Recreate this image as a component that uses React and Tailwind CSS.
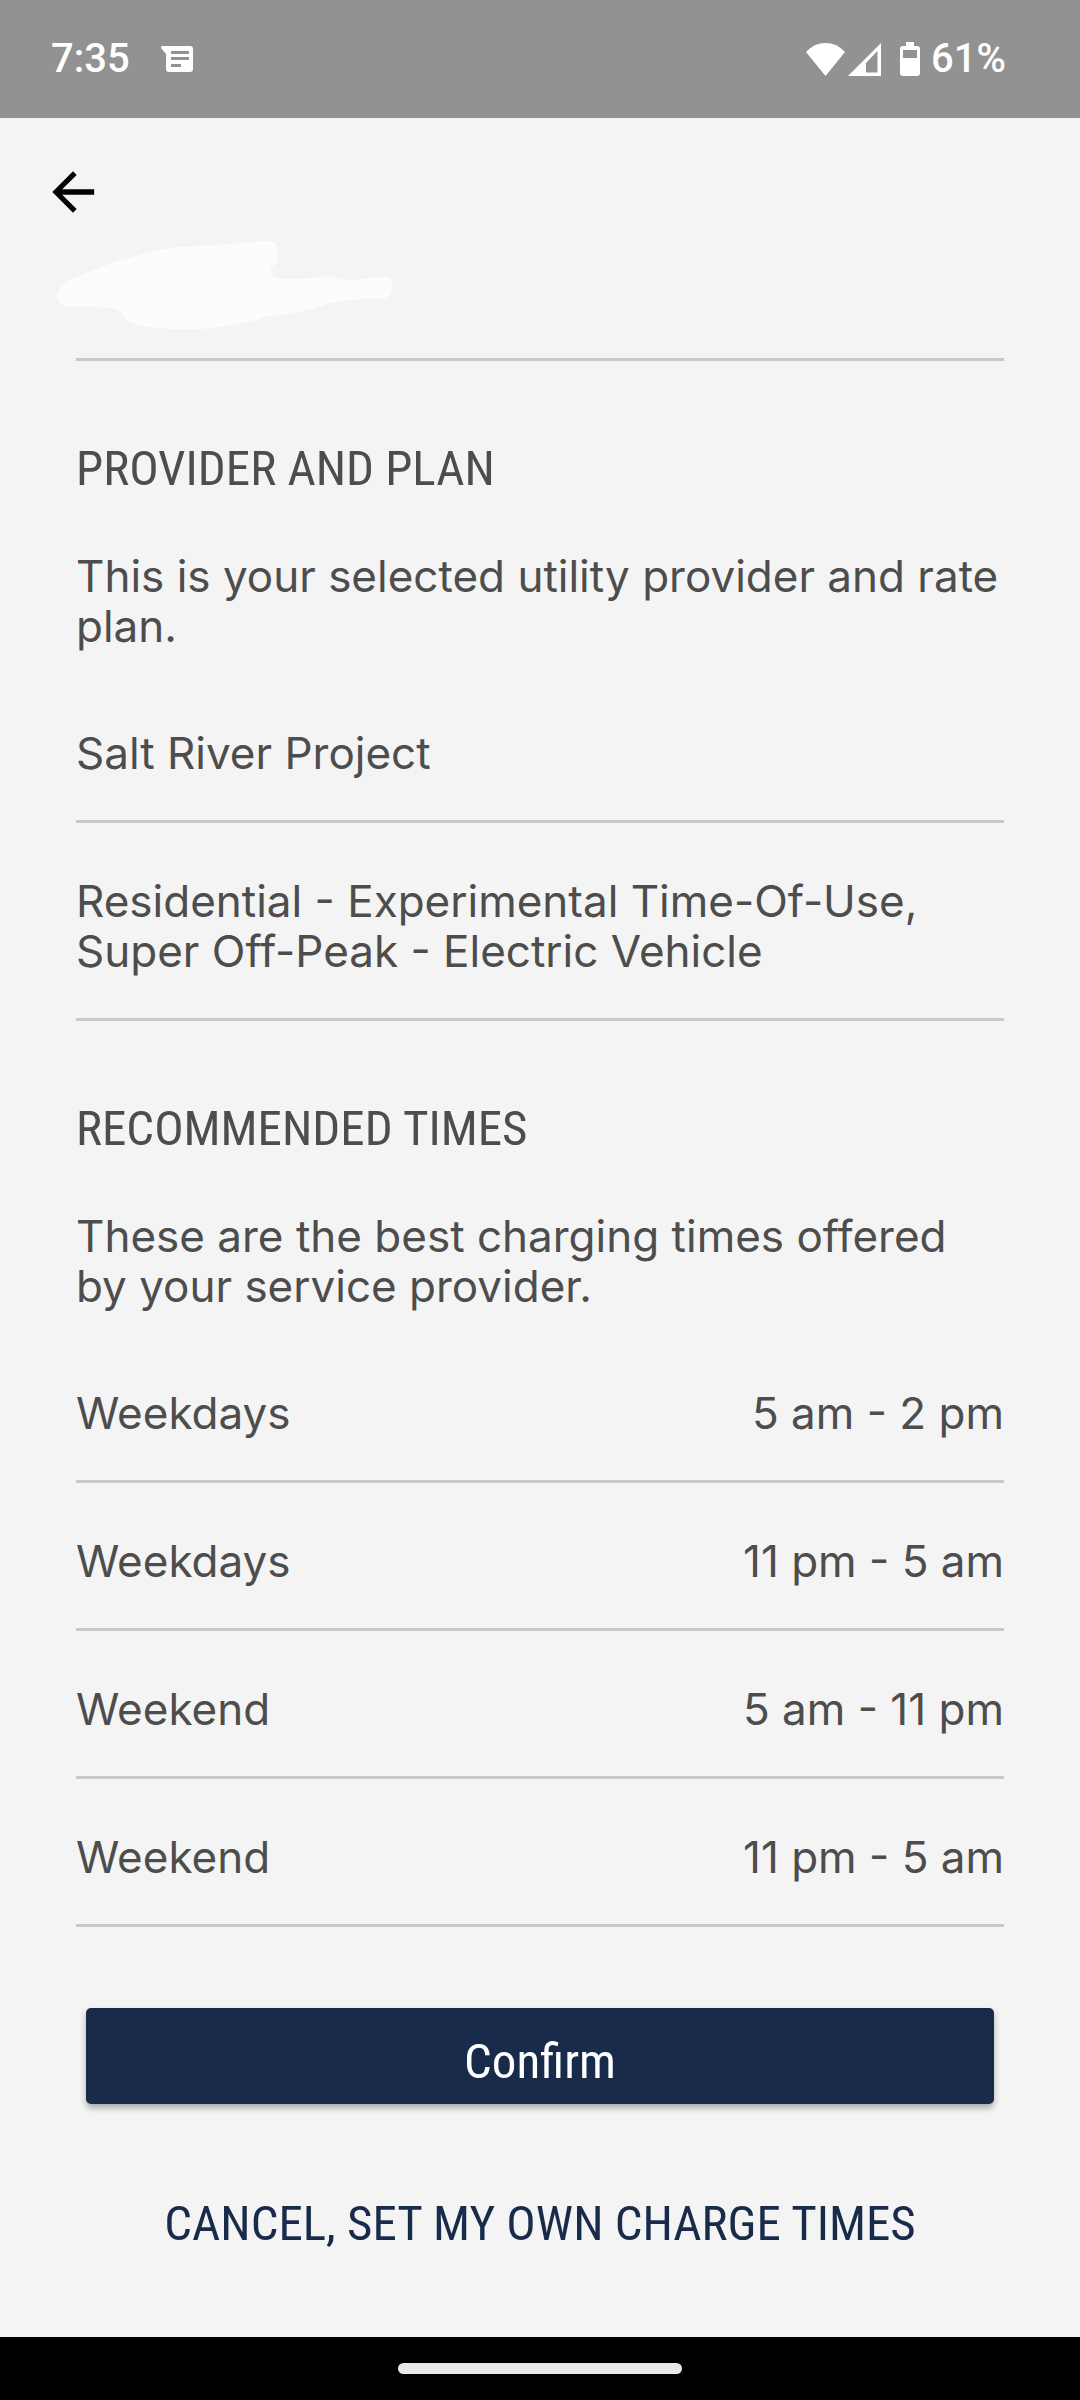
import React from 'react';

const chargeTimes = [
  { day: 'Weekdays', time: '5 am - 2 pm' },
  { day: 'Weekdays', time: '11 pm - 5 am' },
  { day: 'Weekend', time: '5 am - 11 pm' },
  { day: 'Weekend', time: '11 pm - 5 am' },
];

export default function App() {
  return (
    <div className="flex min-h-screen flex-col bg-[#f4f4f4] font-['Inter',sans-serif] text-[44px] leading-[50px] text-[#4d4d4d]">
      <StatusBar />

      {/* Top Bar */}
      <header className="px-[42px] pt-[43px]">
        <button type="button" aria-label="Back" className="block text-black">
          <svg viewBox="0 0 24 24" className="size-[62px]" fill="currentColor">
            <path d="M20.200 10.900H7.830l5.590-5.490L12 4l-8 8 8 8 1.410-1.410L7.830 13.100H20.200z" />
          </svg>
        </button>
      </header>

      <main className="flex-1 px-[76px]">
        <div className="h-[138px] border-b-3 border-[#c8c8c8] pt-[17px]">
          <NameSmudge />
        </div>

        <Section
          title="PROVIDER AND PLAN"
          text="This is your selected utility provider and rate plan."
        >
          <p className="border-b-3 border-[#c8c8c8] pt-[53px] pb-[42px]">Salt River Project</p>
          <p className="border-b-3 border-[#c8c8c8] pt-[53px] pb-[42px]">
            Residential - Experimental Time-Of-Use, Super Off-Peak - Electric Vehicle
          </p>
        </Section>

        <Section
          title="RECOMMENDED TIMES"
          text="These are the best charging times offered by your service provider."
        >
          <table className="w-full border-collapse">
            <tbody>
              {chargeTimes.map((row, i) => (
                <tr key={i} className="border-b-3 border-[#c8c8c8]">
                  <th scope="row" className="pt-[53px] pb-[42px] text-left font-normal">
                    {row.day}
                  </th>
                  <td className="pt-[53px] pb-[42px] text-right">{row.time}</td>
                </tr>
              ))}
            </tbody>
          </table>
        </Section>

        {/* Actions */}
        <div className="flex flex-col px-[10px] pt-[81px] font-['Roboto_Condensed','Roboto',sans-serif] text-[49px] leading-[60px]">
          <button
            type="button"
            className="rounded-[5px] bg-[#182b4a] pt-[24px] pb-[12px] text-white shadow-[0_4px_6px_rgba(0,0,0,0.3)]"
          >
            Confirm
          </button>
          <button type="button" className="mt-[90px] text-[#182b4a]">
            CANCEL, SET MY OWN CHARGE TIMES
          </button>
        </div>
      </main>

      {/* Gesture Bar */}
      <footer className="flex h-[63px] justify-center bg-black pt-[26px]">
        <div className="h-[11px] w-[284px] rounded-full bg-[#e8e8e8]" />
      </footer>
    </div>
  );
}

function Section({ title, text, children }) {
  return (
    <section>
      <h2 className="pt-[78px] pb-[52px] font-['Roboto_Condensed','Roboto',sans-serif] text-[49px] leading-[60px]">
        {title}
      </h2>
      <p className="pb-[24px]">{text}</p>
      {children}
    </section>
  );
}

function StatusBar() {
  return (
    <div className="flex h-[118px] items-center bg-[#929292] pr-[74px] pl-[51px] font-['Roboto',sans-serif] text-[40px] font-medium text-white">
      <span>7:35</span>
      <svg viewBox="0 0 32 26" className="ml-[31px] h-[26px] w-8" fill="currentColor">
        <path
          fillRule="evenodd"
          d="M1 0H29Q32 0 32 3V23Q32 26 29 26H8Q5 26 5 23V8L0 2Q0 0 1 0ZM10 5V8H28V5ZM10 11V14H28V11ZM10 18V21H20V18Z"
        />
      </svg>

      <div className="ml-auto flex items-center">
        <svg viewBox="0 0 39 33" className="h-[33px] w-[39px]" fill="currentColor">
          <path d="M19.500 33L0 9Q8 0 19.500 0T39 9Z" />
        </svg>
        <svg viewBox="0 0 33 33" className="ml-[3px] size-[33px]" fill="currentColor">
          <path fillRule="evenodd" d="M33 0V33H0ZM29.500 8L18 20V29.500H29.500Z" />
        </svg>
        <svg viewBox="0 0 20 34" className="ml-[19px] h-[34px] w-5" fill="currentColor">
          <path
            fillRule="evenodd"
            d="M6 0H14V4H17Q20 4 20 7V31Q20 34 17 34H3Q0 34 0 31V7Q0 4 3 4H6ZM3 8V16H17V8Z"
          />
        </svg>
        <span className="ml-[11px]">61%</span>
      </div>
    </div>
  );
}

// white brush stroke over the location name
function NameSmudge() {
  return (
    <svg viewBox="0 0 338 90" className="-ml-5 h-[90px] w-[338px]" fill="#fcfcfc" aria-hidden="true">
      <path d="M1 55Q2 47 14 40Q48 24 84 15Q103 9 124 7Q165 5 207 1Q222 0 222 8Q222 18 221 22L215 28Q214 35 219 38Q245 40 274 36Q286 40 297 41Q314 37 332 37Q337 40 336 47Q335 56 331 59H307Q289 60 274 63Q262 68 247 71Q226 75 207 77Q198 82 187 83Q165 88 141 89Q113 90 87 86Q76 84 71 80L61 69Q40 66 11 67Q0 63 1 55Z" />
    </svg>
  );
}
